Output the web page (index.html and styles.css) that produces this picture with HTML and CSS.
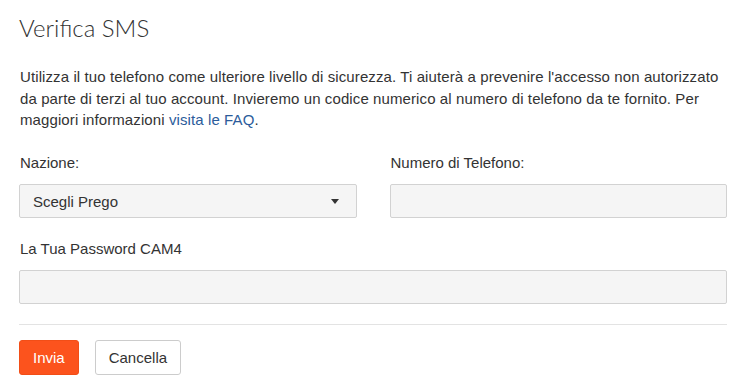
FILE: index.html
```html
<!DOCTYPE html>
<html lang="it">

<head>
    <meta charset="UTF-8">
    <meta name="viewport" content="width=device-width, initial-scale=1">
    <title>Verifica SMS</title>
    <link rel="stylesheet" href="styles.css">
</head>

<body>
    <div class="container">
        <h1>Verifica SMS</h1>
        <p class="intro">Utilizza il tuo telefono come ulteriore livello di sicurezza. Ti aiuterà a prevenire l'accesso non autorizzato da parte di terzi al tuo account. Invieremo un codice numerico al numero di telefono da te fornito. Per maggiori informazioni <a href="#">visita le FAQ</a>.</p>

        <div class="row">
            <div class="input-group">
                <label for="nazione">Nazione:</label>
                <div class="select-box" id="nazione">
                    <span>Scegli Prego</span>
                    <span class="caret"></span>
                </div>
            </div>
            <div class="input-group">
                <label for="telefono">Numero di Telefono:</label>
                <input type="text" id="telefono">
            </div>
        </div>

        <div class="input-group password-group">
            <label for="password">La Tua Password CAM4</label>
            <input type="password" id="password">
        </div>

        <div class="actions">
            <button class="btn-primary">Invia</button>
            <button class="btn-default">Cancella</button>
        </div>
    </div>
</body>

</html>
```

FILE: styles.css
```css
body {
    font-family: "Liberation Sans", Arial, sans-serif;
    font-size: 15px;
    color: #333;
    margin: 0;
    background-color: #fff;
}

.container {
    padding: 0 17px 0 19px;
}

h1 {
    font-family: Lato, "Open Sans", sans-serif;
    font-weight: 300;
    font-size: 24px;
    margin: 0;
    padding-top: 13px;
    line-height: 30px;
}

.intro {
    margin: 23px 0 0;
    padding-left: 1px;
    line-height: 21.5px;
    letter-spacing: 0.1px;
}

.intro a {
    color: #2c5c9b;
    text-decoration: none;
}

.row {
    display: grid;
    grid-template-columns: 1fr 1fr;
    gap: 33px;
    margin-top: 23.5px;
}

.input-group {
    margin-bottom: 22px;
}

.input-group label {
    display: block;
    padding-left: 1px;
    margin-bottom: 12px;
    line-height: 18px;
}

.password-group {
    margin-bottom: 20px;
}

.input-group input,
.select-box {
    display: block;
    width: 100%;
    height: 34px;
    box-sizing: border-box;
    background-color: #f5f5f5;
    border: 1px solid #d2d2d2;
    border-radius: 2px;
    font: inherit;
}

.select-box {
    display: flex;
    align-items: center;
    justify-content: space-between;
    padding: 0 17px 0 13px;
}

.caret {
    width: 0;
    height: 0;
    border-left: 4px solid transparent;
    border-right: 4px solid transparent;
    border-top: 5px solid #333;
}

.actions {
    border-top: 1px solid #e3e3e3;
    padding-top: 15px;
    display: flex;
    gap: 16px;
}

.actions button {
    height: 35px;
    padding: 0 13px;
    font: inherit;
    border-radius: 3px;
    cursor: pointer;
}

.btn-primary {
    background-color: #fc531d;
    color: #fff;
    border: 1px solid #f24e17;
}

.btn-default {
    background-color: #fff;
    color: #333;
    border: 1px solid #ccc;
}
```
